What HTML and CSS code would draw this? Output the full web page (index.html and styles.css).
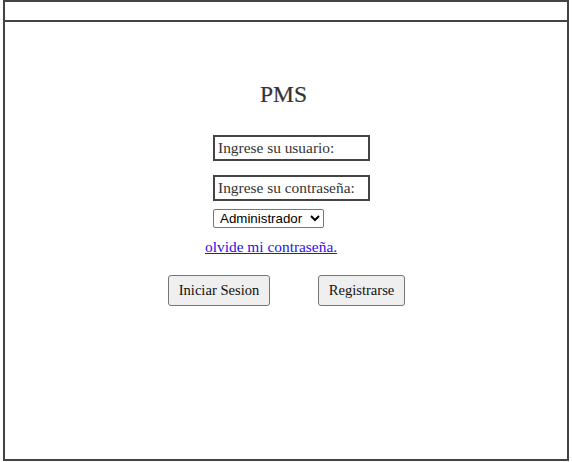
FILE: index.html
```html
<!DOCTYPE html>
<html lang="es">
<head>
<meta charset="utf-8">
<title>PMS</title>
<link rel="stylesheet" href="styles.css">
</head>
<body>
<div class="frame">
  <header class="topbar"></header>
  <main class="login">
    <h1 class="title">PMS</h1>
    <div class="field">Ingrese su usuario:</div>
    <div class="field field-pass">Ingrese su contraseña:</div>
    <select class="role">
      <option>Administrador</option>
    </select>
    <a class="forgot" href="#">olvide mi contraseña.</a>
    <div class="actions">
      <button class="btn btn-login" type="button">Iniciar Sesion</button>
      <button class="btn btn-register" type="button">Registrarse</button>
    </div>
  </main>
</div>
</body>
</html>
```
FILE: styles.css
```css
html, body {
  margin: 0;
  padding: 0;
  background: #fff;
}
body {
  font-family: "Liberation Serif", "DejaVu Serif", serif;
  color: #333;
}
.frame {
  margin: 0 3px;
  height: 461px;
  box-sizing: border-box;
  border: 2px solid #444;
  display: flex;
  flex-direction: column;
}
.topbar {
  height: 18px;
  border-bottom: 2px solid #444;
  flex: none;
}
.login {
  flex: 1;
  display: flex;
  flex-direction: column;
  align-items: flex-start;
  padding-left: 208px;
}
.title {
  margin: 59px 0 0 47px;
  font-size: 23.5px;
  font-weight: normal;
  line-height: 26px;
  color: #333;
  -webkit-text-stroke: 0.2px #333;
}
.field {
  margin-top: 28px;
  width: 157px;
  height: 26px;
  box-sizing: border-box;
  border: 2px solid #444;
  padding: 0 3px;
  font-size: 15.4px;
  line-height: 22px;
  color: #333;
  white-space: nowrap;
}
.field-pass {
  margin-top: 14px;
}
.role {
  margin-top: 8px;
  width: 111px;
  height: 19px;
  font-family: "Liberation Sans", Arial, sans-serif;
  font-size: 13.33px;
  color: #000;
  border: 1px solid #767676;
  border-radius: 2px;
  background: #fff;
  padding: 0 0 0 2px;
}
.forgot {
  margin: 10px 0 0 -8px;
  font-size: 15.4px;
  line-height: 18px;
  color: #2a10e8;
  white-space: nowrap;
}
.actions {
  margin: 19px 0 0 -45px;
  display: flex;
  gap: 48px;
}
.btn {
  font-family: "Liberation Serif", "DejaVu Serif", serif;
  font-size: 14.6px;
  color: #111;
  height: 31px;
  background: #efefef;
  border: 1px solid #767676;
  border-radius: 3px;
  padding: 0;
  white-space: nowrap;
}
.btn-login {
  width: 102px;
}
.btn-register {
  width: 87px;
}
```
